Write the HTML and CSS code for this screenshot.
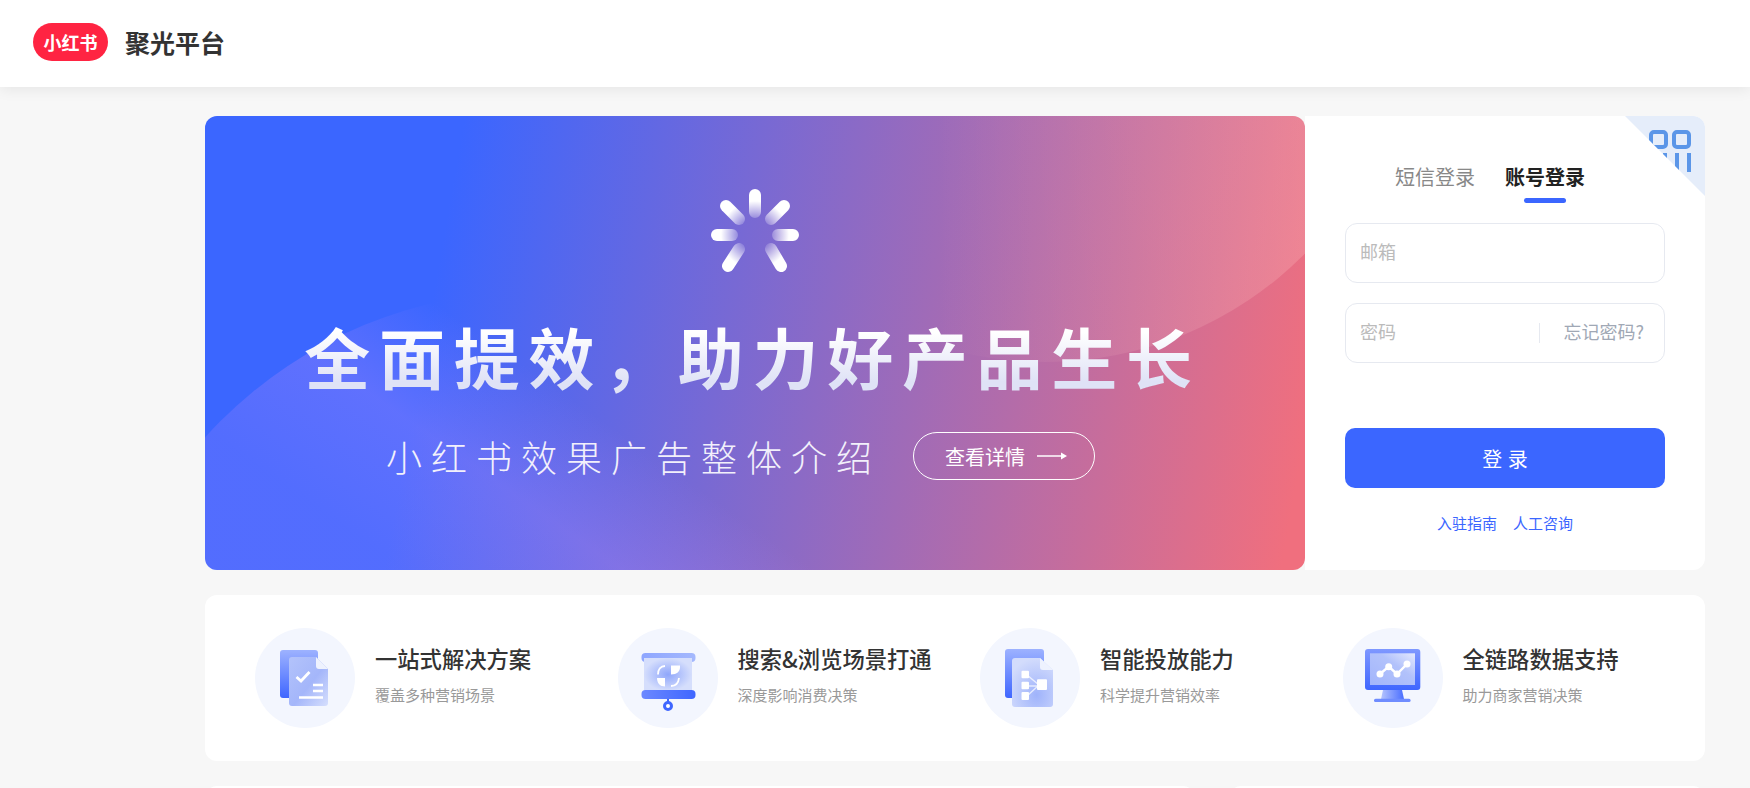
FILE: index.html
```html
<!DOCTYPE html>
<html lang="zh-CN">
<head>
  <meta charset="UTF-8">
  <title>聚光平台</title>
  <link rel="stylesheet" href="styles.css">
</head>
<body>
  <header class="header">
    <span class="logo">小红书</span>
    <span class="platform">聚光平台</span>
  </header>

  <main class="main">
    <section class="hero">
      <div class="banner">
        <div class="curve curve-top"></div>
        <div class="curve curve-bottom"></div>
        <svg class="spinner" viewBox="-50 -50 100 100" width="100" height="100">
          <defs>
            <radialGradient id="spoke" gradientUnits="userSpaceOnUse" cx="0" cy="0" r="40">
              <stop offset="0.38" stop-color="#fff" stop-opacity="0.15"/>
              <stop offset="0.85" stop-color="#fff"/>
            </radialGradient>
          </defs>
          <g stroke="url(#spoke)" stroke-width="12" stroke-linecap="round">
            <line x1="0.01" y1="-40" x2="0" y2="-23"/>
            <line x1="-38" y1="0.01" x2="-23" y2="0"/>
            <line x1="38" y1="0.01" x2="23" y2="0"/>
            <line x1="-29" y1="-29" x2="-16" y2="-16"/>
            <line x1="29" y1="-29" x2="16" y2="-16"/>
            <line x1="-27" y1="31" x2="-16" y2="14"/>
            <line x1="26" y1="31" x2="16" y2="14"/>
          </g>
        </svg>
        <h1 class="banner-title">全面提效，助力好产品生长</h1>
        <div class="banner-sub">
          <span class="banner-desc">小红书效果广告整体介绍</span>
          <a class="detail-btn">查看详情
            <svg width="30" height="10" viewBox="0 0 30 10"><path d="M0 5h24" stroke="#fff" stroke-width="1.5"/><path d="M24 1.5 30 5l-6 3.5z" fill="#fff"/></svg>
          </a>
        </div>
      </div>

      <div class="login">
        <div class="qr-corner">
          <svg width="80" height="80" viewBox="0 0 80 80" fill="none" stroke="#5b96e8" stroke-width="4">
            <rect x="26" y="16" width="15" height="15" rx="3"/>
            <rect x="49" y="16" width="15" height="15" rx="3"/>
            <path d="M28 37v19M40 37v19M52 37v19M64 37v19"/>
          </svg>
        </div>
        <div class="tabs">
          <span class="tab">短信登录</span>
          <span class="tab tab-active">账号登录</span>
        </div>
        <div class="field"><input type="text" placeholder="邮箱"></div>
        <div class="field">
          <input type="password" placeholder="密码">
          <span class="forgot">忘记密码?</span>
        </div>
        <button class="submit">登 录</button>
        <div class="links">
          <a>入驻指南</a>
          <a>人工咨询</a>
        </div>
      </div>
    </section>

    <section class="features">
      <div class="feature">
        <div class="feature-icon">
          <svg width="100" height="100" viewBox="0 0 100 100">
            <defs>
              <linearGradient id="sheetBack" x1="0" y1="0" x2="0" y2="1">
                <stop offset="0" stop-color="#9db2ff"/>
                <stop offset="1" stop-color="#3f66ff"/>
              </linearGradient>
              <linearGradient id="sheetFront" x1="0" y1="0" x2="1" y2="1">
                <stop offset="0" stop-color="#b3c3fb"/>
                <stop offset="0.55" stop-color="#a4b6fa"/>
                <stop offset="1" stop-color="#d6dffd"/>
              </linearGradient>
            </defs>
            <rect x="25" y="22" width="38" height="48" rx="3" fill="url(#sheetBack)"/>
            <path d="M37 29h24l12 12v34a3 3 0 0 1-3 3H37a3 3 0 0 1-3-3V32a3 3 0 0 1 3-3z" fill="url(#sheetFront)"/>
            <path d="M61 29l12 12h-9a3 3 0 0 1-3-3z" fill="#eef2fe"/>
            <path d="M41.500 49l4.500 4 8.500-9" fill="none" stroke="#fff" stroke-width="2.800"/>
            <path d="M58 57h10M58 63h10M44 69.500h24" stroke="#fff" stroke-width="2.400"/>
          </svg>
        </div>
        <div class="feature-text">
          <div class="feature-title">一站式解决方案</div>
          <div class="feature-desc">覆盖多种营销场景</div>
        </div>
      </div>

      <div class="feature">
        <div class="feature-icon">
          <svg width="100" height="100" viewBox="0 0 100 100">
            <defs>
              <linearGradient id="boardTop" x1="0" y1="0" x2="1" y2="0">
                <stop offset="0" stop-color="#8ea6ff"/>
                <stop offset="1" stop-color="#a4b8fd"/>
              </linearGradient>
              <linearGradient id="boardBottom" x1="0" y1="0" x2="1" y2="0">
                <stop offset="0" stop-color="#6b88ff"/>
                <stop offset="1" stop-color="#3f66ff"/>
              </linearGradient>
              <radialGradient id="boardScreen">
                <stop offset="0" stop-color="#8fa6fb"/>
                <stop offset="1" stop-color="#d5defc"/>
              </radialGradient>
            </defs>
            <rect x="23.500" y="25" width="54" height="9" rx="4" fill="url(#boardTop)"/>
            <rect x="26" y="30" width="48" height="33" fill="url(#boardScreen)"/>
            <rect x="23.500" y="62" width="54" height="9" rx="4" fill="url(#boardBottom)"/>
            <path d="M50 71v4" stroke="#3f66ff" stroke-width="2"/>
            <circle cx="50" cy="78" r="3.500" fill="#fff" stroke="#3f66ff" stroke-width="3"/>
            <path d="M47 38C42.500 38 40 41.500 40 46.500" fill="none" stroke="#fff" stroke-width="1.800"/>
            <path d="M53 37.500h9v1.500c0 4.500-3 7.500-9 7.500z" fill="#fff"/>
            <path d="M39 50h8v8.500c-5 0-8-3.500-8-8.500z" fill="#fff"/>
            <path d="M53 58c5 0 7.500-3 8-8" fill="none" stroke="#fff" stroke-width="1.800"/>
          </svg>
        </div>
        <div class="feature-text">
          <div class="feature-title">搜索&amp;浏览场景打通</div>
          <div class="feature-desc">深度影响消费决策</div>
        </div>
      </div>

      <div class="feature">
        <div class="feature-icon">
          <svg width="100" height="100" viewBox="0 0 100 100">
            <defs>
              <linearGradient id="treeBack" x1="0" y1="0" x2="0" y2="1">
                <stop offset="0" stop-color="#9db2ff"/>
                <stop offset="1" stop-color="#3f66ff"/>
              </linearGradient>
              <radialGradient id="treeFront" cx="0.6" cy="0.75" r="0.75">
                <stop offset="0" stop-color="#9fb3fb"/>
                <stop offset="1" stop-color="#d3dcfc"/>
              </radialGradient>
            </defs>
            <rect x="25" y="21" width="39" height="49" rx="3" fill="url(#treeBack)"/>
            <path d="M35 30h25l13 12v34a3 3 0 0 1-3 3H35a3 3 0 0 1-3-3V33a3 3 0 0 1 3-3z" fill="url(#treeFront)"/>
            <path d="M60 30l13 12h-10a3 3 0 0 1-3-3z" fill="#eef2fe"/>
            <path d="M47 47l12 10M47 58h12M47 68l12-11" stroke="#fff" stroke-opacity="0.7" stroke-width="1.500"/>
            <rect x="41.500" y="42.700" width="7.500" height="7.600" rx="1" fill="#fff"/>
            <rect x="41.500" y="53.700" width="7.500" height="7.600" rx="1" fill="#fff"/>
            <rect x="41.500" y="64" width="7.500" height="8" rx="1" fill="#fff"/>
            <rect x="57" y="51.300" width="10" height="10.700" rx="1" fill="#fff"/>
          </svg>
        </div>
        <div class="feature-text">
          <div class="feature-title">智能投放能力</div>
          <div class="feature-desc">科学提升营销效率</div>
        </div>
      </div>

      <div class="feature">
        <div class="feature-icon">
          <svg width="100" height="100" viewBox="0 0 100 100">
            <defs>
              <linearGradient id="monitorFrame" x1="0" y1="0" x2="0" y2="1">
                <stop offset="0" stop-color="#7f98ff"/>
                <stop offset="1" stop-color="#3f66ff"/>
              </linearGradient>
              <linearGradient id="monitorScreen" x1="0" y1="1" x2="1" y2="0">
                <stop offset="0" stop-color="#a2b5fb"/>
                <stop offset="0.6" stop-color="#b2c2fb"/>
                <stop offset="1" stop-color="#e4e9fe"/>
              </linearGradient>
              <linearGradient id="monitorStand" x1="0" y1="0" x2="1" y2="0">
                <stop offset="0" stop-color="#b4c3fd"/>
                <stop offset="1" stop-color="#4a6eff"/>
              </linearGradient>
            </defs>
            <rect x="22" y="21" width="55.300" height="41" rx="3" fill="url(#monitorFrame)"/>
            <rect x="27" y="25.300" width="45" height="31.700" fill="url(#monitorScreen)"/>
            <path d="M40 62h19l2 9H38z" fill="url(#monitorStand)"/>
            <rect x="31" y="70.700" width="36.600" height="3.300" rx="1.600" fill="#6f8cff"/>
            <path d="M37 46l8.700-7.300L54 46l10-10" fill="none" stroke="#fff" stroke-width="2.400"/>
            <circle cx="37" cy="46" r="3.500" fill="#fff"/>
            <circle cx="45.700" cy="38.700" r="3.500" fill="#fff"/>
            <circle cx="54" cy="46" r="3.500" fill="#fff"/>
            <circle cx="64" cy="36" r="3.500" fill="#fff"/>
          </svg>
        </div>
        <div class="feature-text">
          <div class="feature-title">全链路数据支持</div>
          <div class="feature-desc">助力商家营销决策</div>
        </div>
      </div>
    </section>

    <section class="bottom-row">
      <div class="bottom-card bottom-wide"></div>
      <div class="bottom-card bottom-narrow"></div>
    </section>
  </main>
</body>
</html>
```

FILE: styles.css
```css
* {
  box-sizing: border-box;
}
html, body {
  height: 788px;
  overflow: hidden;
}
body {
  margin: 0;
  background: #f7f7f7;
  color: #333;
  font-family: "Noto Sans CJK SC", "Noto Sans", sans-serif;
}
a {
  cursor: pointer;
}

/* header */
.header {
  position: relative;
  height: 87px;
  padding: 0 0 4px 33px;
  display: flex;
  align-items: center;
  gap: 17px;
  background: #fff;
  box-shadow: 0 2px 14px rgba(0, 0, 0, 0.08);
}
.logo {
  width: 75px;
  height: 38px;
  border-radius: 19px;
  background: #ff2442;
  color: #fff;
  font-size: 18px;
  font-weight: 700;
  line-height: 38px;
  text-align: center;
}
.platform {
  font-size: 25px;
  font-weight: 700;
  color: #333;
}

/* page */
.main {
  width: 1500px;
  height: 701px;
  overflow: hidden;
  margin-left: 205px;
  padding-top: 29px;
}
.hero {
  display: flex;
  height: 454px;
}

/* banner */
.banner {
  position: relative;
  width: 1100px;
  overflow: hidden;
  display: flex;
  flex-direction: column;
  align-items: center;
  border-radius: 12px;
  background: linear-gradient(100deg, #3b66ff 22%, #f06f7e 98%);
  color: #fff;
}
.curve {
  position: absolute;
  border-radius: 50%;
}
.curve-top {
  left: 474px;
  top: -486px;
  width: 732px;
  height: 732px;
  background: linear-gradient(90deg, rgba(255, 200, 200, 0) 35%, rgba(255, 200, 200, 0.28) 92%);
}
.curve-bottom {
  left: -115px;
  top: 175px;
  width: 890px;
  height: 890px;
  background: linear-gradient(35deg, rgba(190, 140, 250, 0.18) 55%, rgba(190, 140, 250, 0.28) 65%, rgba(190, 140, 250, 0) 74%);
}
.spinner {
  position: relative;
  margin-top: 69px;
}
.banner-title {
  position: relative;
  margin: 25px 5px 0 0;
  font-size: 66px;
  font-weight: 700;
  line-height: 90px;
  letter-spacing: 8.7px;
  background: linear-gradient(180deg, #fff 25%, #dfe2f6 80%);
  -webkit-background-clip: text;
  background-clip: text;
  color: transparent;
}
.banner-sub {
  position: relative;
  margin: 32px 29px 0 0;
  display: flex;
  align-items: center;
  gap: 32px;
}
.banner-desc {
  font-size: 36px;
  font-weight: 300;
  line-height: 48px;
  letter-spacing: 9px;
  color: #f2f0fb;
}
.detail-btn {
  width: 182px;
  height: 48px;
  padding-left: 4px;
  display: flex;
  align-items: center;
  justify-content: center;
  gap: 12px;
  border: 1px solid #fff;
  border-radius: 24px;
  font-size: 20px;
  color: #fff;
}

/* login */
.login {
  position: relative;
  width: 400px;
  overflow: hidden;
  padding: 47px 40px 0;
  background: #fff;
  border-radius: 0 12px 12px 0;
}
.qr-corner {
  position: absolute;
  top: 0;
  right: 0;
  width: 80px;
  height: 80px;
  background: #e5edfa;
  clip-path: polygon(0 0, 100% 0, 100% 100%);
}
.qr-corner svg {
  display: block;
}
.tabs {
  display: flex;
  gap: 30px;
  margin-left: 50px;
}
.tab {
  position: relative;
  height: 40px;
  font-size: 20px;
  line-height: 28px;
  color: #888;
}
.tab-active {
  font-weight: 700;
  color: #222;
}
.tab-active::after {
  content: "";
  position: absolute;
  left: 19px;
  right: 19px;
  bottom: 0;
  height: 5px;
  border-radius: 3px;
  background: #3b66ff;
}
.field {
  height: 60px;
  margin-top: 20px;
  padding: 0 20px 0 14px;
  display: flex;
  align-items: center;
  border: 1px solid #e6e9f0;
  border-radius: 12px;
  background: #fff;
}
.field input {
  flex: 1;
  min-width: 0;
  margin-bottom: 4px;
  border: none;
  outline: none;
  padding: 0;
  font-family: inherit;
  font-size: 18px;
  background: transparent;
}
.field input::placeholder {
  color: #bbb;
  opacity: 1;
}
.forgot {
  height: 20px;
  padding-left: 23px;
  border-left: 1px solid #e6e9f0;
  font-size: 18px;
  line-height: 16px;
  color: #a0a8b5;
  white-space: nowrap;
}
.submit {
  display: block;
  width: 100%;
  height: 60px;
  margin-top: 65px;
  border: none;
  border-radius: 10px;
  background: #3b66ff;
  color: #fff;
  font-family: inherit;
  font-size: 20px;
  word-spacing: 1px;
}
.links {
  margin-top: 24px;
  display: flex;
  justify-content: center;
  gap: 16px;
  font-size: 15px;
  line-height: 22px;
  color: #3b66ff;
}

/* features */
.features {
  height: 166px;
  margin-top: 25px;
  padding-left: 50px;
  display: grid;
  grid-template-columns: repeat(4, 362.5px);
  align-items: center;
  background: #fff;
  border-radius: 12px;
}
.feature {
  display: flex;
  align-items: center;
  gap: 20px;
}
.feature-icon {
  width: 100px;
  height: 100px;
  flex: none;
  border-radius: 50%;
  background: #f3f6fe;
}
.feature-icon svg {
  display: block;
}
.feature-text {
  margin-bottom: 7px;
}
.feature-title {
  font-size: 22.3px;
  font-weight: 500;
  line-height: 30px;
  color: #333;
}
.feature-desc {
  margin-top: 11px;
  font-size: 15px;
  line-height: 22px;
  color: #999;
}

/* row below the fold */
.bottom-row {
  margin-top: 25px;
  display: flex;
  gap: 34px;
}
.bottom-card {
  height: 300px;
  background: #fff;
  border-radius: 12px;
}
.bottom-wide {
  width: 990px;
}
.bottom-narrow {
  flex: 1;
}
```
